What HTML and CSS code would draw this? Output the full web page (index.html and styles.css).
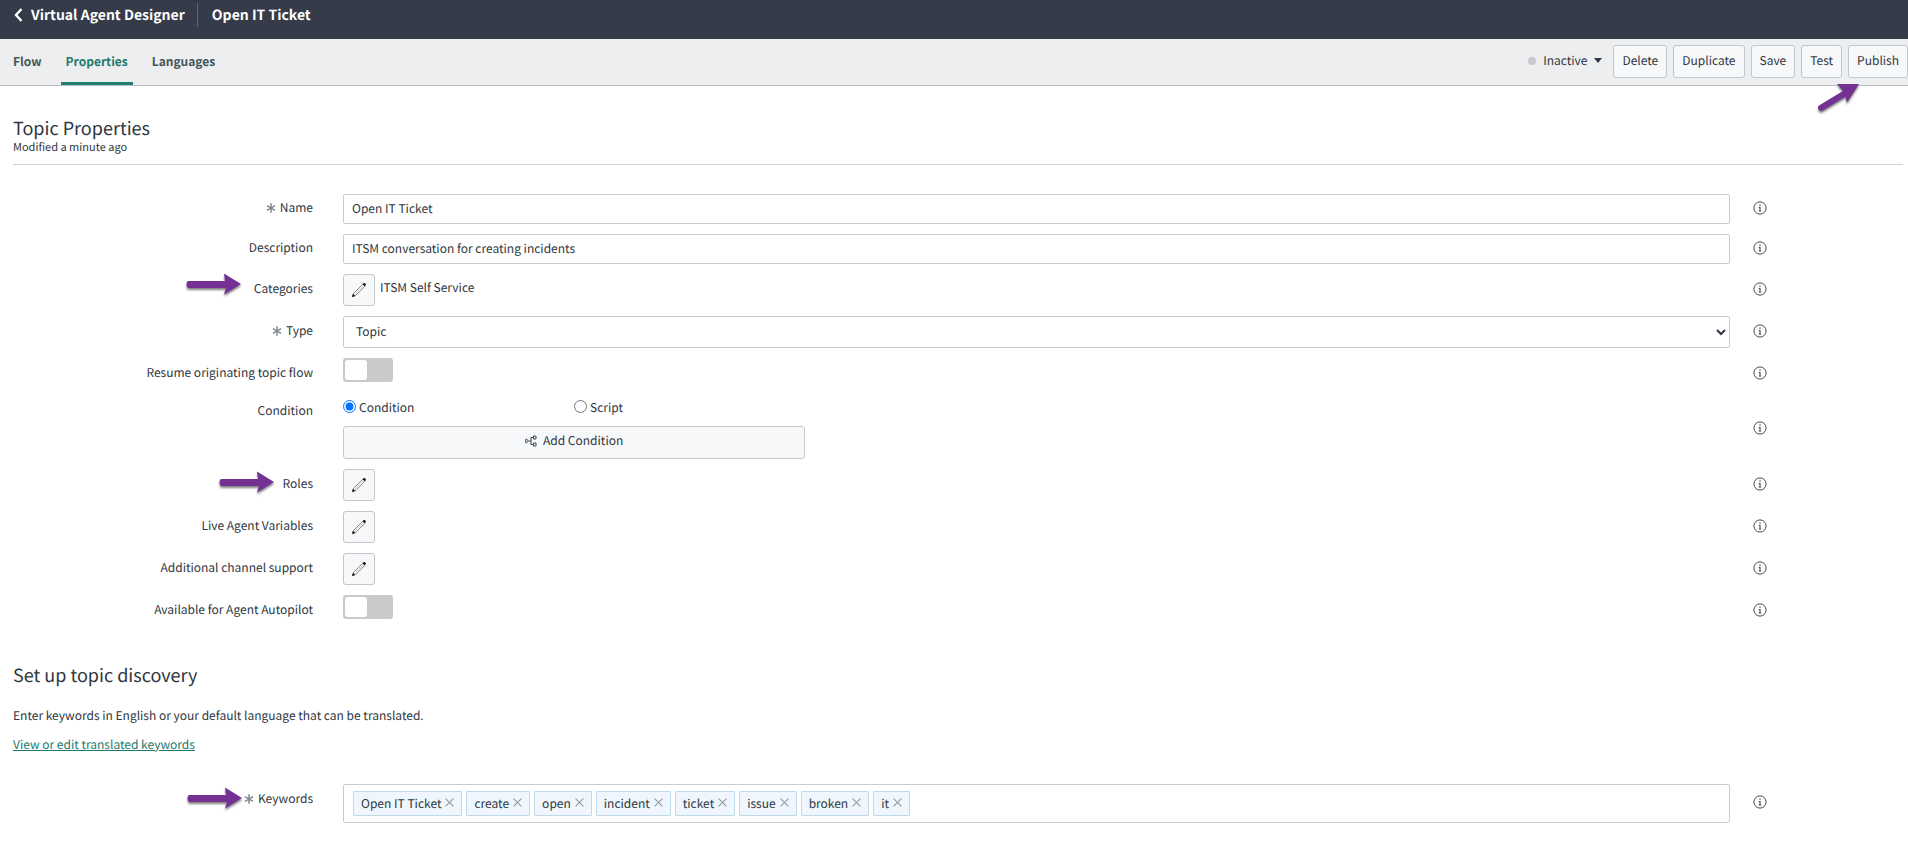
FILE: index.html
```html
<!DOCTYPE html>
<html lang="en">
<head>
    <meta charset="UTF-8">
    <meta name="viewport" content="width=device-width, initial-scale=1.0">
    <title>Virtual Agent Designer</title>
    <link rel="stylesheet" href="styles.css">
</head>
<body>
    <!-- shared icons -->
    <svg class="sprite" aria-hidden="true">
        <symbol id="icon-info" viewBox="0 0 14 14">
            <circle cx="7" cy="7" r="6.1" fill="none" stroke="currentColor" stroke-width=".9"/>
            <path d="M6.400 3.500h1.200v1.200H6.400zM5.700 6h1.800v3.700h.8v.7H5.700v-.7h.8V6.700h-.8z" fill="currentColor"/>
        </symbol>
        <symbol id="icon-pencil" viewBox="0 0 16 16">
            <path d="M1.600 14.600l.9-3.200L12 2.100l2.100 2L4.700 13.500z" fill="#fff" stroke="#666" stroke-width=".8"/>
            <path d="M3.600 12.500L13 3.200" stroke="#999" stroke-width=".5"/>
            <path d="M11.600 2.200l1.200-1.100c.9-.6 2.600.9 2 2l-1.100 1.200zM1 15.100l1-3.300 2.300 2.300z" fill="#111"/>
        </symbol>
        <symbol id="icon-star" viewBox="0 0 10 10">
            <path d="M5 .3v9.400M.9 2.600l8.200 4.800M.9 7.400l8.200-4.800" stroke="currentColor" stroke-width="1.500"/>
        </symbol>
        <symbol id="icon-close" viewBox="0 0 8 8">
            <path d="M.5.5l7 7M7.500.5l-7 7" stroke="currentColor" stroke-width=".9"/>
        </symbol>
        <symbol id="icon-arrow" viewBox="0 0 56 24">
            <path d="M2.500 8H39L38 .5 55 11 38 21.500 40 15H2.500Q.5 14.500 .5 11.500 .5 8 2.500 8z" fill="#743093"/>
        </symbol>
    </svg>

    <header class="header">
        <a href="#" class="back">
            <svg width="9" height="14" viewBox="0 0 9 14"><path d="M7.500 1L2 7l5.500 6" fill="none" stroke="#fff" stroke-width="2.400"/></svg>
            Virtual Agent Designer
        </a>
        <h1>Open IT Ticket</h1>
    </header>

    <div class="toolbar">
        <nav class="tabs">
            <a href="#">Flow</a>
            <a href="#" class="active">Properties</a>
            <a href="#">Languages</a>
        </nav>
        <div class="actions">
            <button type="button" class="status">
                <span class="dot"></span>
                Inactive
                <span class="caret"></span>
            </button>
            <button type="button" class="btn">Delete</button>
            <button type="button" class="btn">Duplicate</button>
            <button type="button" class="btn">Save</button>
            <button type="button" class="btn">Test</button>
            <button type="button" class="btn">Publish</button>
            <svg class="publish-arrow" width="46" height="32" viewBox="0 0 46 32"><path d="M3 21.500L27 7 21 0H43L31 18.500 29.500 12.500 6 27Q3 27 2 24.500 1.500 22.500 3 21.500z" fill="#743093"/></svg>
        </div>
    </div>

    <main class="content">
        <div class="title">
            <h2>Topic Properties</h2>
            <p>Modified a minute ago</p>
        </div>

        <form class="form">
            <div class="row">
                <label class="label" for="name"><svg class="star"><use href="#icon-star"/></svg>Name</label>
                <input type="text" id="name" class="text-input" value="Open IT Ticket">
                <button type="button" class="info" aria-label="Help"><svg><use href="#icon-info"/></svg></button>
            </div>
            <div class="row">
                <label class="label" for="description">Description</label>
                <input type="text" id="description" class="text-input" value="ITSM conversation for creating incidents">
                <button type="button" class="info" aria-label="Help"><svg><use href="#icon-info"/></svg></button>
            </div>
            <div class="row">
                <label class="label" for="categories"><span class="marked">Categories<svg class="arrow far"><use href="#icon-arrow"/></svg></span></label>
                <div class="edit">
                    <button type="button" id="categories" class="edit-button"><svg><use href="#icon-pencil"/></svg></button>
                    <span class="value">ITSM Self Service</span>
                </div>
                <button type="button" class="info" aria-label="Help"><svg><use href="#icon-info"/></svg></button>
            </div>
            <div class="row">
                <label class="label" for="type"><svg class="star"><use href="#icon-star"/></svg>Type</label>
                <select id="type" class="select">
                    <option>Topic</option>
                </select>
                <button type="button" class="info" aria-label="Help"><svg><use href="#icon-info"/></svg></button>
            </div>
            <div class="row tall">
                <label class="label" for="resume">Resume originating topic flow</label>
                <input type="checkbox" id="resume" class="toggle">
                <button type="button" class="info" aria-label="Help"><svg><use href="#icon-info"/></svg></button>
            </div>
            <div class="row">
                <span class="label top" id="condition-label">Condition</span>
                <div role="group" aria-labelledby="condition-label">
                    <div class="radios">
                        <div class="radio">
                            <input type="radio" id="by-condition" name="mode" checked>
                            <label for="by-condition">Condition</label>
                        </div>
                        <div class="radio">
                            <input type="radio" id="by-script" name="mode">
                            <label for="by-script">Script</label>
                        </div>
                    </div>
                    <button type="button" class="add-condition">
                        <svg width="12" height="12" viewBox="0 0 12 12" fill="none" stroke="currentColor" stroke-width=".9"><path d="M.8 4.200h1L3.300 6 1.800 7.800h-1zM3.500 6H6M8 2.500H6v7h2M8.500 1h2.500v3H8.500zM8.500 8h2.500v3H8.500z"/></svg>
                        Add Condition
                    </button>
                </div>
                <button type="button" class="info" aria-label="Help"><svg><use href="#icon-info"/></svg></button>
            </div>
            <div class="row">
                <label class="label" for="roles"><span class="marked">Roles<svg class="arrow"><use href="#icon-arrow"/></svg></span></label>
                <div class="edit">
                    <button type="button" id="roles" class="edit-button"><svg><use href="#icon-pencil"/></svg></button>
                </div>
                <button type="button" class="info" aria-label="Help"><svg><use href="#icon-info"/></svg></button>
            </div>
            <div class="row">
                <label class="label" for="variables">Live Agent Variables</label>
                <div class="edit">
                    <button type="button" id="variables" class="edit-button"><svg><use href="#icon-pencil"/></svg></button>
                </div>
                <button type="button" class="info" aria-label="Help"><svg><use href="#icon-info"/></svg></button>
            </div>
            <div class="row">
                <label class="label" for="channels">Additional channel support</label>
                <div class="edit">
                    <button type="button" id="channels" class="edit-button"><svg><use href="#icon-pencil"/></svg></button>
                </div>
                <button type="button" class="info" aria-label="Help"><svg><use href="#icon-info"/></svg></button>
            </div>
            <div class="row tall">
                <label class="label" for="autopilot">Available for Agent Autopilot</label>
                <input type="checkbox" id="autopilot" class="toggle">
                <button type="button" class="info" aria-label="Help"><svg><use href="#icon-info"/></svg></button>
            </div>
        </form>

        <section class="discovery">
            <h2>Set up topic discovery</h2>
            <p>Enter keywords in English or your default language that can be translated.</p>
            <a href="#">View or edit translated keywords</a>
            <div class="row">
                <label class="label top keywords-label" for="keywords"><span class="marked"><svg class="star"><use href="#icon-star"/></svg>Keywords<svg class="arrow near"><use href="#icon-arrow"/></svg></span></label>
                <div class="keywords">
                    <span class="chip">Open IT Ticket<button type="button" aria-label="Remove"><svg><use href="#icon-close"/></svg></button></span>
                    <span class="chip">create<button type="button" aria-label="Remove"><svg><use href="#icon-close"/></svg></button></span>
                    <span class="chip">open<button type="button" aria-label="Remove"><svg><use href="#icon-close"/></svg></button></span>
                    <span class="chip">incident<button type="button" aria-label="Remove"><svg><use href="#icon-close"/></svg></button></span>
                    <span class="chip">ticket<button type="button" aria-label="Remove"><svg><use href="#icon-close"/></svg></button></span>
                    <span class="chip">issue<button type="button" aria-label="Remove"><svg><use href="#icon-close"/></svg></button></span>
                    <span class="chip">broken<button type="button" aria-label="Remove"><svg><use href="#icon-close"/></svg></button></span>
                    <span class="chip">it<button type="button" aria-label="Remove"><svg><use href="#icon-close"/></svg></button></span>
                    <input type="text" id="keywords">
                </div>
                <button type="button" class="info" aria-label="Help"><svg><use href="#icon-info"/></svg></button>
            </div>
        </section>
    </main>
</body>
</html>
```
FILE: styles.css
```css
* {
    box-sizing: border-box;
}
body {
    font-family: "Noto Sans CJK SC", "Noto Sans", sans-serif;
    font-size: 12px;
    line-height: 18px;
    text-rendering: geometricPrecision;
    color: #2e3640;
    background-color: #fff;
    margin: 0;
}
button, input, select {
    font: inherit;
    color: inherit;
    text-rendering: inherit;
    margin: 0;
}
button {
    cursor: pointer;
}
h1, h2, p {
    margin: 0;
    font-weight: normal;
}
.sprite {
    display: none;
}

.header {
    background-color: #353b48;
    color: #fff;
    height: 39px;
    padding: 3px 14px 12px;
    display: flex;
    align-items: center;
    font-size: 14px;
    line-height: 24px;
}
.header .back {
    color: #fff;
    font-weight: bold;
    text-decoration: none;
    display: flex;
    align-items: center;
    gap: 8px;
    padding-right: 12px;
    border-right: 1px solid #4d7078;
}
.header h1 {
    font-size: 14px;
    font-weight: bold;
    padding-left: 14px;
}

.toolbar {
    background-color: #eceef0;
    border-bottom: 1px solid #b9bdc1;
    height: 47px;
    display: flex;
    justify-content: space-between;
}
.tabs {
    display: flex;
    gap: 14px;
    padding-left: 8px;
}
.tabs a {
    color: #47565a;
    font-weight: bold;
    line-height: 41px;
    text-decoration: none;
    padding: 2px 5px 0;
    border-bottom: 3px solid transparent;
}
.tabs .active {
    color: #1f7a6c;
    border-bottom-color: #1f7f72;
}
.actions {
    position: relative;
    display: flex;
    align-items: flex-start;
    gap: 6px;
    padding-top: 6px;
}
.btn {
    height: 33px;
    padding: 0 8px 2px;
    background-color: #f7f8fa;
    border: 1px solid #c3c6ca;
    border-radius: 3px;
}
.status {
    display: flex;
    align-items: center;
    height: 33px;
    padding: 0 5px 2px;
    background: none;
    border: none;
}
.dot {
    width: 8px;
    height: 8px;
    margin-right: 7px;
    border-radius: 50%;
    background-color: #c8cacc;
}
.caret {
    margin-left: 7px;
    border: 4px solid transparent;
    border-top: 5px solid #2e3640;
    border-bottom: none;
}
.publish-arrow {
    position: absolute;
    right: 46px;
    top: 45px;
    filter: drop-shadow(0 2px 1px rgba(0, 0, 0, 0.5));
}

.content {
    padding: 30px 5px 20px 13px;
}
.title {
    border-bottom: 1px solid #cfd1d3;
    padding-bottom: 9px;
}
h2 {
    font-size: 18px;
    line-height: 24px;
}
.title p {
    font-size: 11px;
    line-height: 15px;
}

.form {
    display: flex;
    flex-direction: column;
    gap: 10px;
    padding-top: 29px;
}
.row {
    display: grid;
    grid-template-columns: 330px 1fr 173px;
    align-items: center;
}
.tall {
    min-height: 32px;
}
.label {
    text-align: right;
    padding: 0 30px 2px 0;
}
.top {
    align-self: start;
    line-height: 22px;
}
.star {
    width: 10px;
    height: 10px;
    margin-right: 4px;
    vertical-align: -1px;
    color: #828a91;
}
.marked {
    position: relative;
}
.arrow {
    position: absolute;
    right: calc(100% + 8px);
    top: -4px;
    width: 56px;
    height: 24px;
    filter: drop-shadow(0 2px 1px rgba(0, 0, 0, 0.5));
}
.far {
    right: calc(100% + 12px);
    top: -7px;
}
.near {
    right: calc(100% + 1px);
    top: -3px;
}
.text-input, .select {
    width: 100%;
    height: 30px;
    padding: 0 8px 2px;
    background-color: #fff;
    border: 1px solid #c8cccd;
    border-radius: 2px;
}
.select {
    height: 32px;
}
.info {
    justify-self: start;
    display: flex;
    margin-left: 23px;
    padding: 0 0 3px;
    background: none;
    border: none;
}
.info svg {
    width: 14px;
    height: 14px;
}
.edit {
    display: flex;
    align-items: center;
    gap: 5px;
}
.value {
    padding-bottom: 5px;
}
.edit-button {
    display: flex;
    align-items: center;
    justify-content: center;
    width: 32px;
    height: 32px;
    padding: 0;
    background-color: #f7f8fa;
    border: 1px solid #c3c6ca;
    border-radius: 3px;
}
.edit-button svg {
    width: 16px;
    height: 16px;
}

.toggle {
    appearance: none;
    align-self: start;
    width: 50px;
    height: 24px;
    padding: 2px;
    background-color: #cacaca;
    border-radius: 3px;
}
.toggle::before {
    content: "";
    display: block;
    width: 22px;
    height: 20px;
    background-color: #fff;
    border-radius: 3px;
}
.toggle:checked {
    padding-left: 26px;
    background-color: #1f7f72;
}

.radios {
    display: flex;
    height: 26px;
}
.radio {
    width: 16.66%;
    display: flex;
    align-items: flex-start;
    gap: 3px;
    line-height: 16px;
}
.radio input {
    width: 13px;
    height: 13px;
}
.add-condition {
    display: flex;
    align-items: center;
    justify-content: center;
    gap: 6px;
    width: 33.33%;
    height: 33px;
    padding-bottom: 4px;
    background-color: #f7f8fa;
    border: 1px solid #c3c6ca;
    border-radius: 3px;
}

.discovery {
    padding-top: 36px;
}
.discovery p {
    padding: 20px 0 11px;
}
.discovery > a {
    color: #1f7a6c;
}
.discovery .row {
    padding-top: 30px;
}
.keywords-label {
    line-height: 29px;
}
.keywords {
    display: flex;
    flex-wrap: wrap;
    gap: 4px;
    padding: 6px 9px;
    border: 1px solid #c8cccd;
    border-radius: 2px;
}
.keywords input {
    flex: 1;
    min-width: 40px;
    padding: 0;
    border: none;
    outline: none;
}
.chip {
    display: flex;
    gap: 4px;
    height: 25px;
    padding: 0 7px;
    line-height: 24px;
    background-color: #eff6fd;
    border: 1px solid #bfd8ea;
    border-radius: 1px;
}
.chip button {
    display: flex;
    padding: 6px 0 0;
    background: none;
    border: none;
    color: #8d979f;
}
.chip svg {
    width: 9px;
    height: 9px;
}
```
